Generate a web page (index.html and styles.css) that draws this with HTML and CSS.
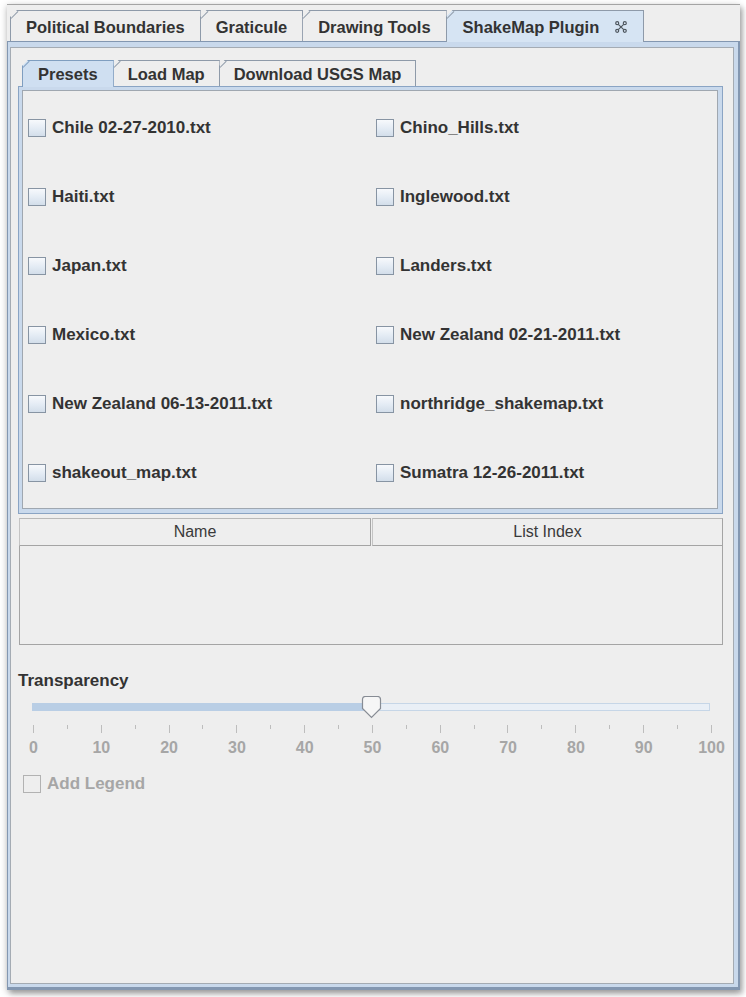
FILE: index.html
```html
<!DOCTYPE html>
<html>
<head>
<meta charset="utf-8">
<title>ShakeMap Plugin</title>
<link rel="stylesheet" href="styles.css">
</head>
<body>
<div class="window">
  <div class="tabs">
    <div class="tab">Political Boundaries</div>
    <div class="tab">Graticule</div>
    <div class="tab">Drawing Tools</div>
    <div class="tab selected">ShakeMap Plugin
      <svg class="close" width="12" height="12" viewBox="0 0 12 12">
        <path d="M3.3 3.3 L8.7 8.7 M8.7 3.3 L3.3 8.7" />
        <circle cx="2.2" cy="2.2" r="1.5" />
        <circle cx="9.8" cy="2.2" r="1.5" />
        <circle cx="2.2" cy="9.8" r="1.5" />
        <circle cx="9.8" cy="9.8" r="1.5" />
      </svg>
    </div>
  </div>
  <div class="panel">
    <div class="panel-inner">
      <div class="subtabs">
        <div class="subtab selected">Presets</div>
        <div class="subtab">Load Map</div>
        <div class="subtab">Download USGS Map</div>
      </div>
      <div class="subpanel">
        <div class="grid">
          <label class="cb"><span class="box"></span>Chile 02-27-2010.txt</label>
          <label class="cb"><span class="box"></span>Chino_Hills.txt</label>
          <label class="cb"><span class="box"></span>Haiti.txt</label>
          <label class="cb"><span class="box"></span>Inglewood.txt</label>
          <label class="cb"><span class="box"></span>Japan.txt</label>
          <label class="cb"><span class="box"></span>Landers.txt</label>
          <label class="cb"><span class="box"></span>Mexico.txt</label>
          <label class="cb"><span class="box"></span>New Zealand 02-21-2011.txt</label>
          <label class="cb"><span class="box"></span>New Zealand 06-13-2011.txt</label>
          <label class="cb"><span class="box"></span>northridge_shakemap.txt</label>
          <label class="cb"><span class="box"></span>shakeout_map.txt</label>
          <label class="cb"><span class="box"></span>Sumatra 12-26-2011.txt</label>
        </div>
      </div>
      <div class="table">
        <div class="thead">
          <div class="th">Name</div>
          <div class="th">List Index</div>
        </div>
        <div class="tbody"></div>
      </div>
      <div class="section-label">Transparency</div>
      <div class="slider">
        <div class="track">
          <div class="fill" style="width: 50%"></div>
          <svg class="thumb" width="21" height="23" viewBox="0 0 21 23">
            <path d="M1.5 3.5 Q1.5 0.5 4.5 0.5 L16.5 0.5 Q19.5 0.5 19.5 3.5 L19.5 12.5 L10.5 21.5 L1.5 12.5 Z" />
          </svg>
        </div>
        <div class="ticks">
          <span class="tk major"></span><span class="tk"></span>
          <span class="tk major"></span><span class="tk"></span>
          <span class="tk major"></span><span class="tk"></span>
          <span class="tk major"></span><span class="tk"></span>
          <span class="tk major"></span><span class="tk"></span>
          <span class="tk major"></span><span class="tk"></span>
          <span class="tk major"></span><span class="tk"></span>
          <span class="tk major"></span><span class="tk"></span>
          <span class="tk major"></span><span class="tk"></span>
          <span class="tk major"></span><span class="tk"></span>
          <span class="tk major"></span>
        </div>
        <div class="nums">
          <span>0</span><span>10</span><span>20</span><span>30</span><span>40</span><span>50</span><span>60</span><span>70</span><span>80</span><span>90</span><span>100</span>
        </div>
      </div>
      <label class="cb disabled legend"><span class="box"></span>Add Legend</label>
    </div>
  </div>
</div>
</body>
</html>
```
FILE: styles.css
```css
* { box-sizing: border-box; }

html, body {
  margin: 0;
  padding: 0;
  background: #ffffff;
  width: 746px;
  height: 997px;
  overflow: hidden;
}

body {
  font-family: "Liberation Sans", Arial, sans-serif;
  color: #333333;
}

.window {
  margin: 4px 0 0 7px;
  width: 733px;
  height: 986px;
  background: #eeeeee;
  border-top: 1px solid #a4a4a4;
  display: flex;
  flex-direction: column;
  box-shadow: 0 2px 7px rgba(0, 0, 0, 0.28), 3px 4px 5px rgba(0, 0, 0, 0.22);
}

/* top tabs */
.tabs {
  display: flex;
  padding: 5px 0 0 3px;
  height: 36px;
  flex: none;
}

.tab {
  position: relative;
  height: 31px;
  padding: 2px 15px 0 15px;
  display: flex;
  align-items: center;
  border: 1px solid #8e9aa9;
  border-bottom: none;
  margin-right: -1px;
  background: #eeeeee;
  font-size: 16.5px;
  font-weight: bold;
  white-space: nowrap;
  clip-path: polygon(0 7px, 7px 0, 100% 0, 100% 100%, 0 100%);
}

.tab::before {
  content: "";
  position: absolute;
  left: 0;
  top: 6.5px;
  width: 10px;
  height: 1px;
  background: #8e9aa9;
  transform-origin: 0 50%;
  transform: rotate(-45deg);
}

.tab.selected {
  background: #d6e4f3;
  padding-left: 16px;
  padding-right: 16px;
  height: 32px;
  margin-bottom: -1px;
  z-index: 2;
}

.close {
  margin-left: 16px;
  margin-top: -1px;
  fill: none;
  stroke: #4e565e;
  stroke-width: 1.2;
}

/* outer panel */
.panel {
  flex: 1;
  min-width: 0;
  border-style: solid;
  border-color: #8397b1;
  border-width: 1px 2px 3px 1px;
  background: #c9d9ec;
  padding: 5px 4px 3px 2px;
  display: flex;
}

.panel-inner {
  flex: 1;
  min-width: 0;
  border: 1px solid #a4abb3;
  background: #eeeeee;
  padding: 12px 9px 0 7px;
  display: flex;
  flex-direction: column;
}

/* sub tabs */
.subtabs {
  display: flex;
  padding-left: 4px;
  height: 26px;
}

.subtab {
  position: relative;
  height: 26px;
  padding: 1px 14px 0 14px;
  display: flex;
  align-items: center;
  border: 1px solid #8e9aa9;
  border-bottom: none;
  margin-right: -1px;
  font-size: 16.5px;
  font-weight: bold;
  white-space: nowrap;
  background: #eeeeee;
  clip-path: polygon(0 6px, 6px 0, 100% 0, 100% 100%, 0 100%);
}

.subtab::before {
  content: "";
  position: absolute;
  left: 0;
  top: 5.5px;
  width: 9px;
  height: 1px;
  background: #8e9aa9;
  transform-origin: 0 50%;
  transform: rotate(-45deg);
}

.subtab.selected {
  background: #cfdff1;
  border-color: #7f9ec0;
  padding-left: 15px;
  padding-right: 15px;
  z-index: 2;
  height: 27px;
  margin-bottom: -1px;
}

.subtab.selected::before { background: #7f9ec0; }

.subpanel {
  width: 705px;
  border: 1px solid #8aa4c4;
  background: #c9d9ec;
  padding: 3px 4px 4px 3px;
}

.grid {
  height: 419px;
  border: 1px solid #9fa7b0;
  background: #eeeeee;
  display: grid;
  grid-template-columns: 348px 1fr;
  grid-template-rows: repeat(6, 1fr);
  align-items: center;
  padding: 2px 0 0 5px;
}

/* checkboxes */
.cb {
  display: flex;
  align-items: center;
  gap: 6px;
  font-size: 17px;
  font-weight: bold;
  color: #333333;
  white-space: nowrap;
}

.box {
  width: 18px;
  height: 18px;
  border: 1px solid #8794a3;
  background: linear-gradient(to bottom, #f7f9fc 0%, #e3ebf4 55%, #d3deea 100%);
  flex: none;
}

.cb.disabled { color: #a6a6a6; }

.cb.disabled .box {
  border-color: #b2b2b2;
  background: #eeeeee;
}

/* table */
.table {
  width: 704px;
  margin-top: 4px;
  margin-left: 1px;
}

.thead {
  display: grid;
  grid-template-columns: 352px 1fr;
  height: 28px;
}

.th {
  border: 1px solid #a4a4a4;
  border-top-color: #b8b8b8;
  border-left-color: #c4c4c4;
  display: flex;
  align-items: center;
  justify-content: center;
  font-size: 16px;
  color: #3a3a3a;
  background: #eeeeee;
}

.th + .th { margin-left: 1px; }

.tbody {
  height: 99px;
  border: 1px solid #a4a4a4;
  border-top: none;
}

/* slider */
.section-label {
  margin-top: 26px;
  line-height: 20px;
  font-size: 17px;
  font-weight: bold;
  color: #333333;
}

.slider {
  padding-top: 12px;
}

.track {
  position: relative;
  margin-left: 14px;
  width: 678px;
  height: 8px;
  border: 1px solid #c6d6e7;
  background: #e9eff6;
}

.fill {
  background: #b9cee5;
  margin: -1px 0 0 -1px;
  height: 8px;
}

.thumb {
  position: absolute;
  left: calc(50% - 10px);
  top: -8px;
  fill: #f6f6f6;
  stroke: #878c94;
  stroke-width: 1.2;
}

.ticks {
  margin: 14px 0 0 15px;
  width: 679px;
  height: 8px;
  display: flex;
  justify-content: space-between;
  align-items: flex-start;
}

.tk {
  width: 1px;
  height: 4px;
  background: #bdbdbd;
}

.tk.major { height: 8px; }

.nums {
  margin: 6px 0 0 15px;
  width: 679px;
  display: flex;
  justify-content: space-between;
}

.nums span {
  width: 1px;
  display: flex;
  justify-content: center;
  font-size: 16px;
  font-weight: bold;
  line-height: 18px;
  color: #a6a6a6;
}

.legend {
  margin-top: 17px;
  margin-left: 5px;
}
```
